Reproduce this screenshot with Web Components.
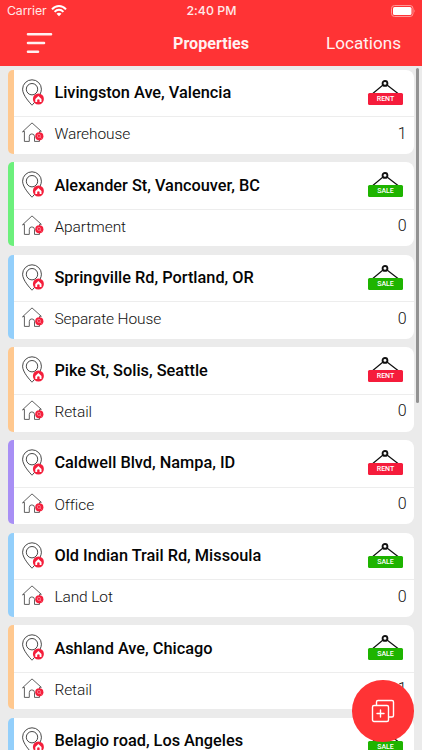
<!DOCTYPE html>
<html lang="en">
<head>
<meta charset="utf-8">
<title>Properties</title>
<style>
html,body{margin:0;height:100%;overflow:hidden;background:#ebebeb}
</style>
</head>
<body>
<property-app></property-app>
<script>
const define = (name, html, setup) => customElements.define(name, class extends HTMLElement {
  constructor() {
    super();
    this.attachShadow({ mode: 'open' }).innerHTML = html;
  }
  connectedCallback() { if (setup) setup(this, this.shadowRoot); }
});

define('status-bar', `
<style>
:host{display:grid;grid-template-columns:1fr auto 1fr;align-items:center;height:22px;padding:0 6px 0 7px;box-sizing:border-box;font:400 12.3px/22px Inter,Roboto,sans-serif;color:#ffe9e9}
.left{display:flex;align-items:center;gap:5px}
.carrier{letter-spacing:-.12px}
.time{font-weight:500;letter-spacing:.05px}
.battery{justify-self:end}
svg{display:block}
</style>
<div class="left"><span class="carrier">Carrier</span>
<svg width="16" height="12" viewBox="0 0 16 12" fill="none" stroke="#fff" stroke-width="2"><path d="M1 4.3C5-.1 11-.1 15 4.3M3.6 6.9C6.2 4.1 9.8 4.1 12.4 6.9"/><path d="M8 11.3 5.5 8.8C7 7.4 9 7.4 10.500 8.800Z" fill="#fff" stroke="none"/></svg></div>
<span class="time">2:40 PM</span>
<svg class="battery" width="25" height="12" viewBox="0 0 25 12"><rect x=".5" y=".5" width="21.500" height="11" rx="3" fill="none" stroke="#ff9898"/><rect x="2" y="2" width="18.500" height="8" rx="1.500" fill="#fff"/><path d="M23.300 4.200q1.300 1.800 0 3.600z" fill="#ffa0a0"/></svg>`);

define('nav-bar', `
<style>
:host{display:grid;grid-template-columns:1fr auto 1fr;align-items:center;height:43px;padding:0 21px 0 26px;box-sizing:border-box;font-family:Roboto,sans-serif;color:#fff1f1}
.title{font-weight:700;font-size:16.1px;line-height:43px;padding-right:5px}
.action{justify-self:end;font-weight:400;font-size:17.100px;line-height:43px}
svg{display:block;margin-top:-1px}
</style>
<svg width="27" height="22" viewBox="0 0 27 22" stroke="#fff1f1" stroke-width="2.600" stroke-linecap="round"><path d="M2 2.200H25M2 11H18M2 19.800H12"/></svg>
<span class="title"><slot name="title"></slot></span>
<span class="action"><slot name="action"></slot></span>`);

define('pin-icon', `
<style>:host{display:block}svg{display:block}</style>
<svg width="22" height="28" viewBox="0 0 22 28" fill="none" stroke="#333" stroke-width=".9">
<path d="M10 26.200C8.300 24.300 .6 16.400 .6 10.200A9.400 9.400 0 0 1 19.400 10.200C19.400 16.400 11.700 24.300 10 26.200Z"/><circle cx="10" cy="10.200" r="5.700"/>
<circle cx="16.400" cy="20" r="5.500" fill="#f41f3b" stroke="none"/>
<path d="M13.300 19.900 16.400 16.900l3.100 3v3h-1.900v-2.100q-1.200-1.100-2.400 0v2.100h-1.900z" fill="#fff" stroke="none"/></svg>`);

define('house-icon', `
<style>:host{display:block}svg{display:block}</style>
<svg width="22" height="20" viewBox="0 0 22 20" fill="none" stroke="#444" stroke-width=".85">
<path d="M2.400 19.400V9.300L.5 9.800 10 .9l9.300 8.400-1.800 0V19.400H12.500V14.500a2.600 2.600 0 0 0-5.200 0V19.400Z"/>
<circle cx="17.300" cy="14.300" r="4.100" fill="#f41f3b" stroke="none"/>
<circle cx="16.900" cy="13.900" r="1.600" stroke="#ff9aa9" stroke-width=".7"/><path d="m18.100 15.100 1.400 1.400" stroke="#ff9aa9" stroke-width=".7"/></svg>`);

define('deal-sign', `
<style>
:host{display:flex;flex-direction:column;width:35px}
svg{display:block}
.plate{height:12px;border-radius:1.500px;background:#f51c3b;color:#fff;font:500 7px/12.500px Roboto,sans-serif;text-align:center}
:host([kind=SALE]) .plate{background:#1eb400}
</style>
<svg width="35" height="13" viewBox="0 0 35 13" fill="none" stroke="#111"><path d="M15 5 4.800 13.500M19 5 30 13.500" stroke-width="1.250"/><circle cx="17" cy="3.400" r="2.400" stroke-width="1.900"/></svg>
<div class="plate"><slot></slot></div>`);

define('property-card', `
<style>
:host{display:block;flex:none;height:84.150px;box-sizing:border-box;border-left:6px solid var(--accent);border-radius:5px 8px 8px 5px;background:#fff;font-family:Roboto,sans-serif;overflow:hidden}
.row{display:grid;grid-template-columns:22px 1fr auto;align-items:start;column-gap:10.400px;box-sizing:border-box;padding-left:8px}
.top{height:47.500px;border-bottom:1px solid #ededed;padding-right:10.500px}
.bottom{padding-right:7px;height:36px}
.name{font-weight:500;font-size:16.320px;line-height:20px;color:#050505;margin-top:13.400px;white-space:nowrap}
.type,.count{font-weight:300;line-height:20px;color:#111}
.type{font-size:15.500px;letter-spacing:-.1px;margin-top:7px}
.count{font-size:16px;margin-top:6.500px}
pin-icon{margin-top:9px}
house-icon{margin-top:5px}
deal-sign{margin-top:10px}
</style>
<div class="row top"><pin-icon></pin-icon><span class="name"><slot></slot></span><deal-sign></deal-sign></div>
<div class="row bottom"><house-icon></house-icon><span class="type"></span><span class="count"></span></div>`, (el, root) => {
  const sign = root.querySelector('deal-sign');
  sign.setAttribute('kind', el.getAttribute('deal'));
  sign.textContent = el.getAttribute('deal');
  root.querySelector('.type').textContent = el.getAttribute('type') || '';
  root.querySelector('.count').textContent = el.getAttribute('count') || '';
  el.style.setProperty('--accent', el.getAttribute('accent'));
});

define('add-button', `
<style>
:host{display:grid;place-items:center;width:61.500px;height:61.500px;border-radius:50%;background:#ff3335}
svg{display:block}
</style>
<svg width="24" height="24" viewBox="0 0 24 24" fill="none" stroke="#fff" stroke-width="1.400" stroke-linejoin="round" stroke-linecap="round"><rect x="1.500" y="6.500" width="16" height="16" rx="1.500"/><path d="M5.500 6V3A1.500 1.500 0 0 1 7 1.500H21A1.500 1.500 0 0 1 22.500 3V16.500A1.500 1.500 0 0 1 21 18H18M9.500 11v7M6 14.500h7"/></svg>`);

define('property-app', `
<style>
:host{display:flex;flex-direction:column;height:750px;width:422px;position:relative;overflow:hidden;background:#ebebeb}
header{background:#ff3335;height:65.500px;flex:none}
main{display:flex;flex-direction:column;gap:8.450px;padding:4.200px 8.500px 0 8px;flex:1;min-height:0;overflow:hidden}
.thumb{position:absolute;left:415.500px;top:68px;width:3px;height:335px;border-radius:2px;background:#929292}
add-button{position:absolute;left:352px;top:680px}
</style>
<header><status-bar></status-bar><nav-bar><span slot="title">Properties</span><span slot="action">Locations</span></nav-bar></header>
<main>
<property-card accent="#ffc88f" deal="RENT" type="Warehouse" count="1">Livingston Ave, Valencia</property-card>
<property-card accent="#6cf07c" deal="SALE" type="Apartment" count="0">Alexander St, Vancouver, BC</property-card>
<property-card accent="#93cffb" deal="SALE" type="Separate House" count="0">Springville Rd, Portland, OR</property-card>
<property-card accent="#ffc88f" deal="RENT" type="Retail" count="0">Pike St, Solis, Seattle</property-card>
<property-card accent="#a88ff5" deal="RENT" type="Office" count="0">Caldwell Blvd, Nampa, ID</property-card>
<property-card accent="#93cffb" deal="SALE" type="Land Lot" count="0">Old Indian Trail Rd, Missoula</property-card>
<property-card accent="#ffc88f" deal="SALE" type="Retail" count="1">Ashland Ave, Chicago</property-card>
<property-card accent="#93cffb" deal="SALE">Belagio road, Los Angeles</property-card>
</main>
<div class="thumb"></div>
<add-button></add-button>`);
</script>
</body>
</html>
